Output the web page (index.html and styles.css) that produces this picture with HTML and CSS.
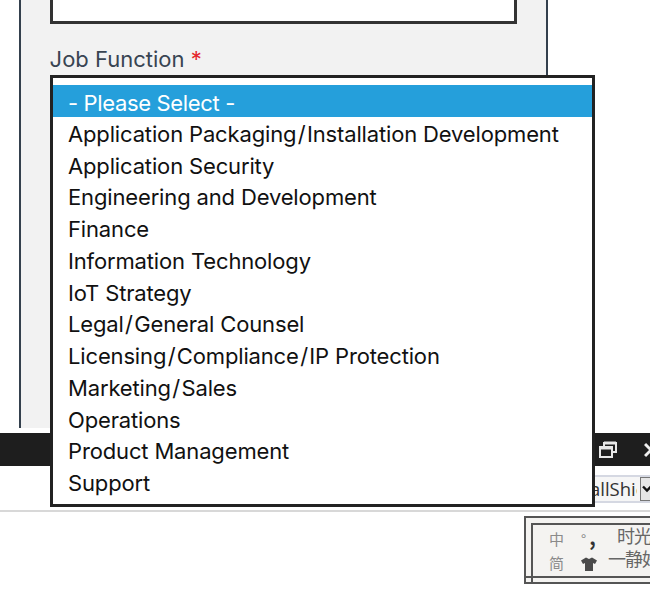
FILE: index.html
```html
<!DOCTYPE html>
<html lang="en">
<head>
    <meta charset="UTF-8">
    <title>Job Function</title>
    <link rel="stylesheet" href="styles.css">
</head>
<body>
<div class="page">
    <div class="panel">
        <div class="text-input"></div>
        <div class="field-label">Job Function <span class="req">*</span></div>
    </div>
    <div class="titlebar">
        <svg class="win-btn" width="20" height="18" viewBox="0 0 20 18">
            <path d="M6 5V2h12v9h-3" fill="none" stroke="#e8e8e8" stroke-width="2"/>
            <path d="M6 2h12" stroke="#e8e8e8" stroke-width="3"/>
            <rect x="2" y="6" width="12" height="10" fill="none" stroke="#e8e8e8" stroke-width="2"/>
            <path d="M2 7h12" stroke="#e8e8e8" stroke-width="3"/>
        </svg>
        <svg class="win-btn" width="6" height="18" viewBox="0 0 6 18">
            <path d="M1 3l12 12M13 3L1 15" stroke="#f0f0f0" stroke-width="3"/>
        </svg>
    </div>
    <div class="toolbar">
        <div class="tool-select">
            <span class="tool-value">allShie</span>
            <span class="tool-arrow">
                <svg width="10" height="8" viewBox="0 0 10 8"><path d="M1 1.5l4 4 4-4" fill="none" stroke="#111" stroke-width="2.4"/></svg>
            </span>
        </div>
    </div>
    <div class="lower">
        <div class="ime-box">
            <div class="ime-inner">
                <div class="ime-col"><span>中</span><span>简</span></div>
                <div class="ime-col ime-icons">
                    <span class="ime-punct">°<b>,</b></span>
                    <svg width="16" height="14" viewBox="0 0 16 14"><path d="M5 0.5 8 2l3-1.5 5 3-2 3.5-2-1V14H4V6L2 7 0 3.5z" fill="#4a4a4a"/></svg>
                </div>
                <div class="ime-text"><span class="first">时光</span><span>一静好</span></div>
            </div>
        </div>
    </div>

    <ul class="listbox">
        <li class="selected">- Please Select -</li>
        <li>Application Packaging<span class="sl">/</span>Installation Development</li>
        <li>Application Security</li>
        <li>Engineering and Development</li>
        <li>Finance</li>
        <li>Information Technology</li>
        <li>IoT Strategy</li>
        <li>Legal<span class="sl">/</span>General Counsel</li>
        <li>Licensing<span class="sl">/</span>Compliance<span class="sl">/</span>IP Protection</li>
        <li>Marketing<span class="sl">/</span>Sales</li>
        <li>Operations</li>
        <li>Product Management</li>
        <li>Support</li>
    </ul>
</div>
</body>
</html>
```

FILE: styles.css
```css
* { box-sizing: border-box; }
html, body { margin: 0; height: 100%; overflow: hidden; }
body {
    background: #fff;
    font-family: Inter, "Liberation Sans", sans-serif;
}
.page {
    position: relative;
    width: 650px;
    height: 595px;
}
.panel {
    margin-left: 19px;
    width: 529px;
    height: 428px;
    background: #f2f2f2;
    border-left: 2px solid #34404d;
    border-right: 2px solid #34404d;
    padding-left: 29px;
}
.text-input {
    width: 467px;
    height: 24px;
    background: #fff;
    border: 3px solid #333;
    border-top: none;
}
.field-label {
    margin: 21px 0 0 -0.4px;
    font-size: 22px;
    line-height: 28px;
    color: #384452;
}
.req { color: #e5262c; }

.titlebar {
    margin-top: 5px;
    height: 33px;
    background: #1e1e1e;
    display: flex;
    justify-content: flex-end;
    align-items: center;
    gap: 26px;
}
.toolbar {
    height: 46px;
    padding: 9px 0 0 560px;
    border-bottom: 2px solid #d8d8d8;
}
.tool-select {
    display: flex;
    height: 28px;
    background: #f6f6f6;
    border-top: 2px solid #d5d8e2;
    border-bottom: 2px solid #d5d8e2;
}
.tool-value {
    flex: none;
    width: 77px;
    margin-right: 3px;
    padding-left: 30px;
    font-size: 18.5px;
    line-height: 24px;
    color: #333;
    font-family: "Open Sans", sans-serif;
    overflow: hidden;
    white-space: nowrap;
}
.tool-arrow {
    flex: none;
    width: 10px;
    display: flex;
    align-items: center;
    padding-left: 1px;
    overflow: hidden;
    background: #e6e6e6;
    border: 1px solid #777;
    border-right: none;
}
.tool-arrow svg { flex: none; }
.lower { padding: 4px 0 0 524px; }
.ime-box {
    position: relative;
    width: 126px;
    height: 68px;
    border: 2px solid #555;
    border-right: none;
    padding: 5px 0 0 5px;
    background: #f4f3f1;
}
.ime-box::after {
    content: "";
    position: absolute;
    left: 0;
    right: 0;
    bottom: 4px;
    height: 2px;
    background: #555;
}
.ime-inner {
    display: flex;
    height: 100%;
    border: 2px solid #555;
    border-width: 2px 0 0 2px;
    padding: 2px 0 0 16px;
    overflow: hidden;
    font-family: "Noto Sans CJK SC", sans-serif;
    color: #8a8a8a;
}
.ime-col {
    display: flex;
    flex: none;
    flex-direction: column;
    width: 32px;
    font-size: 15px;
    line-height: 24px;
}
.ime-icons svg { margin-top: 6px; }
.ime-punct { font-size: 14px; color: #888; }
.ime-punct b { margin-left: 3px; color: #333; font-size: 20px; line-height: 20px; }
.ime-text {
    display: flex;
    flex: none;
    flex-direction: column;
    margin: -3px 0 0 -5px;
    font-size: 18px;
    line-height: 23px;
    letter-spacing: -1px;
    color: #666;
    white-space: nowrap;
}
.ime-text .first { margin-left: 9px; }

.listbox {
    position: absolute;
    left: 50px;
    top: 75px;
    width: 545px;
    height: 432px;
    margin: 0;
    padding: 7px 0 0;
    list-style: none;
    background: #fff;
    border: 3px solid #222;
    font-size: 22px;
    letter-spacing: -0.15px;
    color: #111;
}
.listbox li {
    height: 31.75px;
    line-height: 32px;
    padding-left: 15px;
    white-space: nowrap;
}
.listbox .selected {
    margin-bottom: 1px;
    padding-top: 2px;
    letter-spacing: -0.35px;
    background: #259fdb;
    color: #fff;
}
.sl { padding: 0 1.4px; }
```
